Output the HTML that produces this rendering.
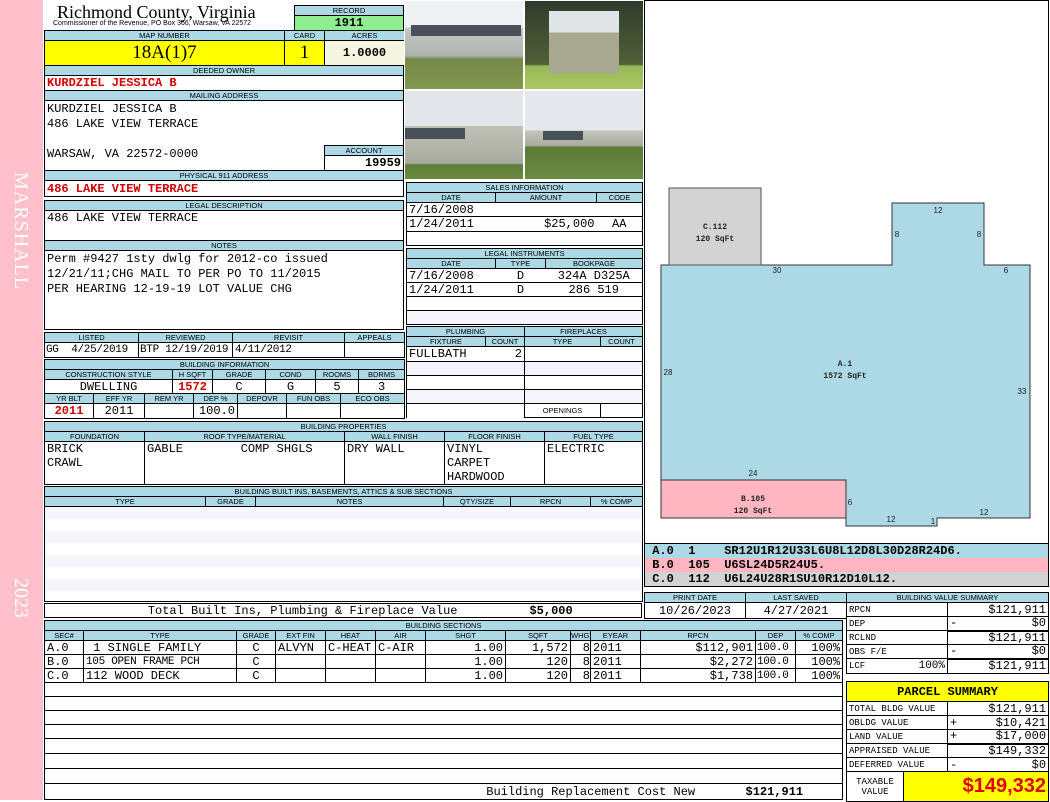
<!DOCTYPE html>
<html><head><meta charset="utf-8"><style>
*{margin:0;padding:0}
body{width:1050px;height:800px;position:relative;background:#fff;overflow:hidden;font-family:"Liberation Mono",monospace}
.a{position:absolute;box-sizing:border-box}
table{position:absolute;border-collapse:collapse;table-layout:fixed}
td{border:1px solid #000;padding:0 2px;font:12px/12px "Liberation Mono",monospace;white-space:nowrap;overflow:hidden;box-sizing:border-box}
td.h{background:#add8e6;font:7.5px/8px "Liberation Sans",sans-serif;text-align:center;padding:0;height:10px}
.r{color:#d00000;font-weight:bold}
.ra{text-align:right}
.ce{text-align:center}
.s{font-size:11px;letter-spacing:-0.3px}
.box{position:absolute;border:1px solid #000;box-sizing:border-box;font:12px/15px "Liberation Mono",monospace;padding:0 2px;white-space:pre}
.z td{background:#f5f5fb}
</style></head><body>
<div class="a" style="left:0;top:0;width:43px;height:800px;background:#ffc0cb"></div>
<div class="a" style="left:12px;top:172px;width:20px;color:#fff;font:20px 'Liberation Serif',serif;writing-mode:vertical-rl;letter-spacing:1px">MARSHALL</div>
<div class="a" style="left:12px;top:578px;width:20px;color:#fff;font:20px 'Liberation Serif',serif;writing-mode:vertical-rl">2023</div>

<div class="a" style="left:57px;top:2px;font:18px/20px 'Liberation Serif',serif">Richmond County, Virginia</div>
<div class="a" style="left:53px;top:20px;font:7px/8px 'Liberation Sans',sans-serif">Commissioner of the Revenue, PO Box 366, Warsaw, VA 22572</div>

<table style="left:294px;top:5px;width:110px"><tr><td class="h">RECORD</td></tr><tr><td style="height:15px;background:#90ee90;text-align:center;font-weight:bold;font-size:12px">1911</td></tr></table>

<table style="left:44px;top:30px;width:360px"><col style="width:240px"><col style="width:40px"><col style="width:80px">
<tr><td class="h">MAP NUMBER</td><td class="h">CARD</td><td class="h">ACRES</td></tr>
<tr><td style="height:25px;background:#ffff00;text-align:center;font:19px 'Liberation Serif',serif">18A(1)7</td><td style="background:#ffff00;text-align:center;font:19px 'Liberation Serif',serif">1</td><td style="background:#f5f5e0;text-align:center;font-weight:bold;font-size:12px">1.0000</td></tr></table>

<table style="left:44px;top:65px;width:360px"><tr><td class="h">DEEDED OWNER</td></tr><tr><td class="r" style="height:15px;font-size:12px">KURDZIEL JESSICA B</td></tr><tr><td class="h">MAILING ADDRESS</td></tr></table>
<div class="box" style="left:44px;top:100px;width:360px;height:71px;padding-top:1px">KURDZIEL JESSICA B
486 LAKE VIEW TERRACE

WARSAW, VA 22572-0000</div>
<table style="left:324px;top:145px;width:80px"><tr><td class="h">ACCOUNT</td></tr><tr><td style="height:15px;text-align:right;font-weight:bold;font-size:12px">19959</td></tr></table>
<table style="left:44px;top:170px;width:360px"><tr><td class="h">PHYSICAL 911 ADDRESS</td></tr><tr><td class="r" style="height:16px;font-size:12px">486 LAKE VIEW TERRACE</td></tr></table>

<table style="left:44px;top:200px;width:360px"><tr><td class="h">LEGAL DESCRIPTION</td></tr></table>
<div class="box" style="left:44px;top:210px;width:360px;height:31px">486 LAKE VIEW TERRACE</div>
<table style="left:44px;top:240px;width:360px"><tr><td class="h">NOTES</td></tr></table>
<div class="box" style="left:44px;top:250px;width:360px;height:80px;padding-top:1px">Perm #9427 1sty dwlg for 2012-co issued
12/21/11;CHG MAIL TO PER PO TO 11/2015
PER HEARING 12-19-19 LOT VALUE CHG</div>

<table style="left:44px;top:332px;width:360px"><col style="width:94px"><col style="width:94px"><col style="width:112px"><col style="width:60px">
<tr><td class="h">LISTED</td><td class="h">REVIEWED</td><td class="h">REVISIT</td><td class="h">APPEALS</td></tr>
<tr><td class="s" style="height:15px;padding:0 1px">GG &nbsp;4/25/2019</td><td class="s" style="padding:0 1px">BTP 12/19/2019</td><td class="s">4/11/2012</td><td></td></tr></table>

<table style="left:44px;top:359px;width:360px"><col style="width:128px"><col style="width:40px"><col style="width:53px"><col style="width:50px"><col style="width:43px"><col style="width:46px">
<tr><td class="h" colspan="6">BUILDING INFORMATION</td></tr>
<tr><td class="h">CONSTRUCTION STYLE</td><td class="h">H SQFT</td><td class="h">GRADE</td><td class="h">COND</td><td class="h">ROOMS</td><td class="h">BDRMS</td></tr>
<tr><td class="ce" style="height:14px">DWELLING</td><td class="ce r">1572</td><td class="ce">C</td><td class="ce">G</td><td class="ce">5</td><td class="ce">3</td></tr></table>
<table style="left:44px;top:393px;width:360px"><col style="width:49px"><col style="width:51px"><col style="width:49px"><col style="width:44px"><col style="width:49px"><col style="width:54px"><col style="width:64px">
<tr><td class="h">YR BLT</td><td class="h">EFF YR</td><td class="h">REM YR</td><td class="h">DEP %</td><td class="h">DEPOVR</td><td class="h">FUN OBS</td><td class="h">ECO OBS</td></tr>
<tr><td class="ce r" style="height:15px;font-size:12px">2011</td><td class="ce">2011</td><td></td><td class="ra">100.0</td><td></td><td></td><td></td></tr></table>

<table style="left:44px;top:421px;width:598px"><col style="width:100px"><col style="width:200px"><col style="width:100px"><col style="width:100px"><col style="width:98px">
<tr><td class="h" colspan="5">BUILDING PROPERTIES</td></tr>
<tr><td class="h">FOUNDATION</td><td class="h">ROOF TYPE/MATERIAL</td><td class="h">WALL FINISH</td><td class="h">FLOOR FINISH</td><td class="h">FUEL TYPE</td></tr>
<tr><td style="height:42px;vertical-align:top;line-height:14px">BRICK<br>CRAWL</td><td style="vertical-align:top;line-height:14px">GABLE &nbsp; &nbsp; &nbsp; &nbsp;COMP SHGLS</td><td style="vertical-align:top;line-height:14px">DRY WALL</td><td style="vertical-align:top;line-height:14px">VINYL<br>CARPET<br>HARDWOOD</td><td style="vertical-align:top;line-height:14px">ELECTRIC</td></tr></table>

<table style="left:44px;top:486px;width:598px"><col style="width:161px"><col style="width:50px"><col style="width:188px"><col style="width:67px"><col style="width:80px"><col style="width:52px">
<tr><td class="h" colspan="6">BUILDING BUILT INS, BASEMENTS, ATTICS &amp; SUB SECTIONS</td></tr>
<tr><td class="h">TYPE</td><td class="h">GRADE</td><td class="h">NOTES</td><td class="h">QTY/SIZE</td><td class="h">RPCN</td><td class="h">% COMP</td></tr>
<tr class="z"><td colspan="6" style="height:12px;border-width:0 1px"></td></tr><tr><td colspan="6" style="height:12px;border-width:0 1px"></td></tr>
<tr class="z"><td colspan="6" style="height:12px;border-width:0 1px"></td></tr><tr><td colspan="6" style="height:12px;border-width:0 1px"></td></tr>
<tr class="z"><td colspan="6" style="height:12px;border-width:0 1px"></td></tr><tr><td colspan="6" style="height:12px;border-width:0 1px"></td></tr>
<tr class="z"><td colspan="6" style="height:12px;border-width:0 1px"></td></tr><tr><td colspan="6" style="height:11px;border-width:0 1px 1px"></td></tr>
</table>
<div class="box" style="left:44px;top:603px;width:598px;height:15px;font-size:12px;line-height:14px">              Total Built Ins, Plumbing &amp; Fireplace Value          <b>$5,000</b></div>

<table style="left:44px;top:620px;width:798px"><col style="width:39px"><col style="width:153px"><col style="width:39px"><col style="width:50px"><col style="width:50px"><col style="width:50px"><col style="width:80px"><col style="width:65px"><col style="width:20px"><col style="width:50px"><col style="width:115px"><col style="width:40px"><col style="width:47px">
<tr><td class="h" colspan="13">BUILDING SECTIONS</td></tr>
<tr><td class="h">SEC#</td><td class="h">TYPE</td><td class="h">GRADE</td><td class="h">EXT FIN</td><td class="h">HEAT</td><td class="h">AIR</td><td class="h">SHGT</td><td class="h">SQFT</td><td class="h">WHGT</td><td class="h">EYEAR</td><td class="h">RPCN</td><td class="h">DEP</td><td class="h">% COMP</td></tr>
<tr><td style="height:14px">A.0</td><td>&nbsp;1 SINGLE FAMILY</td><td class="ce">C</td><td>ALVYN</td><td>C-HEAT</td><td>C-AIR</td><td class="ra">1.00</td><td class="ra">1,572</td><td class="ra" style="padding:0">8</td><td>2011</td><td class="ra">$112,901</td><td class="s" style="padding:0 1px">100.0</td><td class="ra">100%</td></tr>
<tr><td style="height:14px">B.0</td><td class="s">105 OPEN FRAME PCH</td><td class="ce">C</td><td></td><td></td><td></td><td class="ra">1.00</td><td class="ra">120</td><td class="ra" style="padding:0">8</td><td>2011</td><td class="ra">$2,272</td><td class="s" style="padding:0 1px">100.0</td><td class="ra">100%</td></tr>
<tr><td style="height:14px">C.0</td><td>112 WOOD DECK</td><td class="ce">C</td><td></td><td></td><td></td><td class="ra">1.00</td><td class="ra">120</td><td class="ra" style="padding:0">8</td><td>2011</td><td class="ra">$1,738</td><td class="s" style="padding:0 1px">100.0</td><td class="ra">100%</td></tr>
<tr><td colspan="13" style="height:14px"></td></tr><tr><td colspan="13" style="height:14px"></td></tr><tr><td colspan="13" style="height:14px"></td></tr><tr><td colspan="13" style="height:14px"></td></tr><tr><td colspan="13" style="height:15px"></td></tr><tr><td colspan="13" style="height:15px"></td></tr><tr><td colspan="13" style="height:15px"></td></tr>
<tr><td colspan="13" style="height:16px;font-size:12px;white-space:pre">                                                             Building Replacement Cost New       <b>$121,911</b></td></tr>
</table>

<!-- photos -->
<div class="a" style="left:404px;top:0;width:120px;height:90px;background:linear-gradient(#eef2f4 0,#eef2f4 30%,#c4c8c4 30%,#b0b4ae 62%,#74884a 66%,#83984e 100%);border:1px solid #fff"><div class="a" style="left:6px;top:24px;width:110px;height:11px;background:#4a5058"></div></div>
<div class="a" style="left:524px;top:0;width:120px;height:90px;background:linear-gradient(#2f3a2a 0,#35402e 10%,#506038 72%,#9ab858 74%,#a9c860 100%);border:1px solid #fff"><div class="a" style="left:24px;top:10px;width:70px;height:62px;background:linear-gradient(#e0e4e6 0,#e0e4e6 35%,#a8a890 35%)"></div></div>
<div class="a" style="left:524px;top:0;width:120px;height:90px;border:1px solid #fff;background:none"></div>
<div class="a" style="left:404px;top:90px;width:120px;height:90px;background:linear-gradient(#e2e6ea 0,#e2e6ea 40%,#c0c2b8 40%,#a8aaa0 82%,#5c7c3a 84%,#6a8a40 100%);border:1px solid #fff"><div class="a" style="left:0;top:37px;width:60px;height:11px;background:#4a5058"></div></div>
<div class="a" style="left:524px;top:90px;width:120px;height:90px;background:linear-gradient(#e4e8ec 0,#e4e8ec 45%,#c4c6bc 45%,#a8aa9e 62%,#5a7a36 64%,#6a8c42 100%);border:1px solid #fff"><div class="a" style="left:18px;top:40px;width:40px;height:9px;background:#4a5058"></div></div>

<table style="left:406px;top:182px;width:236px"><col style="width:89px"><col style="width:101px"><col style="width:46px">
<tr><td class="h" colspan="3">SALES INFORMATION</td></tr>
<tr><td class="h">DATE</td><td class="h">AMOUNT</td><td class="h">CODE</td></tr>
<tr><td style="height:14px;border-right:0">7/16/2008</td><td style="border-left:0;border-right:0"></td><td style="border-left:0"></td></tr>
<tr><td style="height:15px;border-right:0">1/24/2011</td><td class="ra" style="border-left:0;border-right:0">$25,000</td><td class="ce" style="border-left:0">AA</td></tr>
<tr><td colspan="3" style="height:14px"></td></tr></table>
<table style="left:406px;top:248px;width:236px"><col style="width:89px"><col style="width:50px"><col style="width:97px">
<tr><td class="h" colspan="3">LEGAL INSTRUMENTS</td></tr>
<tr><td class="h">DATE</td><td class="h">TYPE</td><td class="h">BOOKPAGE</td></tr>
<tr><td style="height:14px;border-right:0">7/16/2008</td><td class="ce" style="border-left:0;border-right:0">D</td><td class="ce" style="border-left:0">324A D325A</td></tr>
<tr><td style="height:14px;border-right:0">1/24/2011</td><td class="ce" style="border-left:0;border-right:0">D</td><td class="ce" style="border-left:0">286 519</td></tr>
<tr><td colspan="3" style="height:14px"></td></tr><tr class="z"><td colspan="3" style="height:14px"></td></tr></table>

<table style="left:406px;top:326px;width:236px"><col style="width:79px"><col style="width:39px"><col style="width:76px"><col style="width:42px">
<tr><td class="h" colspan="2">PLUMBING</td><td class="h" colspan="2">FIREPLACES</td></tr>
<tr><td class="h">FIXTURE</td><td class="h">COUNT</td><td class="h">TYPE</td><td class="h">COUNT</td></tr>
<tr><td style="height:15px;border-right:0">FULLBATH</td><td class="ra" style="border-left:0">2</td><td colspan="2"></td></tr>
<tr class="z"><td colspan="2" style="height:14px"></td><td colspan="2"></td></tr>
<tr><td colspan="2" style="height:14px"></td><td colspan="2"></td></tr>
<tr class="z"><td colspan="2" style="height:14px"></td><td colspan="2"></td></tr>
<tr><td colspan="2" style="height:14px;border:0;border-left:1px solid #000;background:#fff"></td><td class="ce" style="font:7.5px 'Liberation Sans',sans-serif">OPENINGS</td><td></td></tr></table>

<!-- sketch -->
<div class="a" style="left:644px;top:0;width:405px;height:544px;border:1px solid #000"></div>
<svg class="a" style="left:0;top:0" width="1050" height="800">
<polygon points="661,265 892,265 892,203 984,203 984,265 1030,265 1030,518 937,518 937,526 846,526 846,518 661,518" fill="#add8e6" stroke="#333" stroke-width="1"/>
<rect x="661" y="480" width="185" height="38" fill="#ffb6c1" stroke="#333"/>
<rect x="669" y="188" width="92" height="77" fill="#d3d3d3" stroke="#555"/>
<g font-family="Liberation Mono" font-size="8" font-weight="bold" fill="#222" text-anchor="middle">
<text x="715" y="229">C.112</text><text x="715" y="241">120 SqFt</text>
<text x="845" y="366">A.1</text><text x="845" y="378">1572 SqFt</text>
<text x="753" y="501">B.105</text><text x="753" y="513">120 SqFt</text></g>
<g font-family="Liberation Sans" font-size="8" fill="#222" text-anchor="middle">
<text x="938" y="213">12</text><text x="897" y="237">8</text><text x="979" y="237">8</text>
<text x="777" y="273">30</text><text x="1006" y="273">6</text><text x="668" y="375">28</text>
<text x="1022" y="394">33</text><text x="753" y="476">24</text><text x="850" y="505">6</text>
<text x="891" y="522">12</text><text x="984" y="515">12</text><text x="933" y="524">1</text></g>
</svg>

<div class="a" style="left:644px;top:543px;width:405px;height:15px;background:#add8e6;border:1px solid #000;border-bottom:0;font:bold 12px/14px 'Liberation Mono';white-space:pre"> A.0  1    SR12U1R12U33L6U8L12D8L30D28R24D6.</div>
<div class="a" style="left:644px;top:558px;width:405px;height:14px;background:#ffb6c1;border-left:1px solid #000;border-right:1px solid #000;font:bold 12px/14px 'Liberation Mono';white-space:pre"> B.0  105  U6SL24D5R24U5.</div>
<div class="a" style="left:644px;top:572px;width:405px;height:15px;background:#d3d3d3;border:1px solid #000;border-top:0;font:bold 12px/14px 'Liberation Mono';white-space:pre"> C.0  112  U6L24U28R1SU10R12D10L12.</div>

<table style="left:644px;top:592px;width:202px"><col style="width:101px"><col style="width:101px">
<tr><td class="h">PRINT DATE</td><td class="h">LAST SAVED</td></tr>
<tr><td class="ce" style="height:16px;font-size:12px">10/26/2023</td><td class="ce" style="font-size:12px">4/27/2021</td></tr></table>

<table style="left:846px;top:592px;width:202px"><col style="width:101px"><col style="width:101px">
<tr><td class="h" colspan="2">BUILDING VALUE SUMMARY</td></tr>
<tr><td style="height:14px;font-size:9px">RPCN</td><td class="ra">$121,911</td></tr>
<tr><td style="height:14px;font-size:9px">DEP</td><td class="ra" style="border-bottom:2px solid #000"><span style="float:left">-</span>$0</td></tr>
<tr><td style="height:14px;font-size:9px">RCLND</td><td class="ra">$121,911</td></tr>
<tr><td style="height:14px;font-size:9px">OBS F/E</td><td class="ra" style="border-bottom:2px solid #000"><span style="float:left">-</span>$0</td></tr>
<tr><td style="height:15px;font-size:9px">LCF<span style="float:right;font-size:11px">100%</span></td><td class="ra">$121,911</td></tr></table>

<table style="left:846px;top:681px;width:202px"><col style="width:57px"><col style="width:44px"><col style="width:101px">
<tr><td colspan="3" style="height:20px;background:#ffff00;text-align:center;font:bold 12px 'Liberation Mono'">PARCEL SUMMARY</td></tr>
<tr><td colspan="2" style="height:14px;font-size:9px">TOTAL BLDG VALUE</td><td class="ra">$121,911</td></tr>
<tr><td colspan="2" style="height:14px;font-size:9px">OBLDG VALUE</td><td class="ra"><span style="float:left">+</span>$10,421</td></tr>
<tr><td colspan="2" style="height:14px;font-size:9px">LAND VALUE</td><td class="ra" style="border-bottom:2px solid #000"><span style="float:left">+</span>$17,000</td></tr>
<tr><td colspan="2" style="height:14px;font-size:9px">APPRAISED VALUE</td><td class="ra">$149,332</td></tr>
<tr><td colspan="2" style="height:14px;font-size:9px">DEFERRED VALUE</td><td class="ra"><span style="float:left">-</span>$0</td></tr>
<tr><td style="height:30px;font-size:9px;line-height:10px;text-align:center">TAXABLE<br>VALUE</td><td colspan="2" style="background:#ffff00;text-align:right;color:#e00000;font:bold 20px 'Liberation Sans',sans-serif">$149,332</td></tr></table>
</body></html>
